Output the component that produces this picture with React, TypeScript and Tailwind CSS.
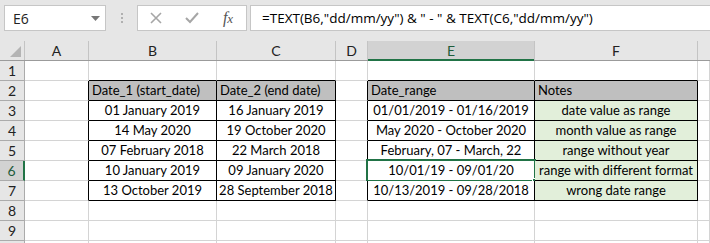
import React from 'react'

const colW = ['w-[25px]', 'w-[64px]', 'w-[128px]', 'w-[119px]', 'w-[32px]', 'w-[167px]', 'w-[163px]', 'flex-1']
const letters = ['', 'A', 'B', 'C', 'D', 'E', 'F', '']

type Cell = { text: string; head?: boolean; note?: boolean }

const data: Record<number, Record<number, Cell>> = {
    2: {
        2: { text: 'Date_1 (start_date)', head: true },
        3: { text: 'Date_2 (end date)', head: true },
        5: { text: 'Date_range', head: true },
        6: { text: 'Notes', head: true },
    },
    3: {
        2: { text: '01 January 2019' },
        3: { text: '16 January 2019' },
        5: { text: '01/01/2019 - 01/16/2019' },
        6: { text: 'date value as range', note: true },
    },
    4: {
        2: { text: '14 May 2020' },
        3: { text: '19 October 2020' },
        5: { text: 'May 2020 - October 2020' },
        6: { text: 'month value as range', note: true },
    },
    5: {
        2: { text: '07 February 2018' },
        3: { text: '22 March 2018' },
        5: { text: 'February, 07 - March, 22' },
        6: { text: 'range without year', note: true },
    },
    6: {
        2: { text: '10 January 2019' },
        3: { text: '09 January 2020' },
        5: { text: '10/01/19 - 09/01/20' },
        6: { text: 'range with different format', note: true },
    },
    7: {
        2: { text: '13 October 2019' },
        3: { text: '28 September 2018' },
        5: { text: '10/13/2019 - 09/28/2018' },
        6: { text: 'wrong date range', note: true },
    },
}

const inTable = (r: number, c: number) => r >= 2 && r <= 7 && (c === 2 || c === 3 || c === 5 || c === 6)

function Row({ r }: { r: number }) {
    const sel = r === 6
    return (
        <div className="flex h-[20px]">
            <div
                className={
                    sel
                        ? 'w-[25px] shrink-0 flex items-center justify-center bg-[#d2d2d2] border-b border-b-[#ababab] border-r-2 border-r-[#217346] text-[#1e5c3a] text-[14px]'
                        : 'w-[25px] shrink-0 flex items-center justify-center bg-[#e6e6e6] border-b border-b-[#ababab] border-r border-r-[#ababab] text-[#222] text-[14px]'
                }
            >
                {r < 10 ? r : ''}
            </div>
            {[1, 2, 3, 4, 5, 6, 7].map(c => {
                const cell = data[r]?.[c]
                const rightBlack = inTable(r, c) || inTable(r, c + 1)
                const bottomBlack = inTable(r, c) || inTable(r + 1, c)
                const bg = cell?.head ? 'bg-[#bfbfbf]' : cell?.note ? 'bg-[#e2efda]' : 'bg-white'
                const align = cell?.head ? 'justify-start pl-[3px]' : 'justify-center'
                return (
                    <div
                        key={c}
                        className={[
                            'relative flex items-end pb-[1px] shrink-0 border-r border-b text-[13px] leading-[18px] text-black whitespace-nowrap',
                            colW[c],
                            rightBlack ? 'border-r-black' : 'border-r-[#d4d4d4]',
                            bottomBlack ? 'border-b-black' : 'border-b-[#d4d4d4]',
                            bg,
                            align,
                        ].join(' ')}
                    >
                        {cell?.text}
                        {r === 6 && c === 5 && (
                            <div className="absolute -left-[2px] -top-[2px] -right-[2px] -bottom-[2px] border-2 border-[#217346]">
                                <div className="absolute -right-[4px] -bottom-[4px] w-[6px] h-[6px] bg-[#217346] border border-white" />
                            </div>
                        )}
                    </div>
                )
            })}
        </div>
    )
}

export default function App() {
    return (
        <div className="w-[710px] h-[243px] overflow-hidden bg-white" style={{ fontFamily: 'Lato, "Liberation Sans", sans-serif' }}>
            {/* toolbar */}
            <div className="h-[41px] bg-[#e6e6e6] flex items-start pt-[5px] pl-[4px]">
                <div className="w-[102px] h-[26px] bg-white border border-[#c6c6c6] flex items-center justify-between pl-[8px] pr-[5px]">
                    <span className="text-[14px] text-[#222]" style={{ fontFamily: '"Open Sans", sans-serif' }}>E6</span>
                    <svg width="9" height="5" viewBox="0 0 9 5"><path d="M0 0h9L4.5 5z" fill="#777" /></svg>
                </div>
                <div className="w-[31px] h-[26px] flex flex-col items-center justify-center gap-[2px]">
                    <div className="w-[2px] h-[2px] bg-[#b0b0b0]" />
                    <div className="w-[2px] h-[2px] bg-[#b0b0b0]" />
                    <div className="w-[2px] h-[2px] bg-[#b0b0b0]" />
                </div>
                <div className="w-[110px] h-[26px] bg-white border border-[#c6c6c6] flex items-center">
                    <div className="w-[36px] flex justify-center">
                        <svg width="12" height="12" viewBox="0 0 12 12"><path d="M1 1l10 10M11 1L1 11" stroke="#a6a6a6" strokeWidth="1.6" /></svg>
                    </div>
                    <div className="w-[36px] flex justify-center">
                        <svg width="14" height="12" viewBox="0 0 14 12"><path d="M1 6l4 4 8-9" stroke="#a6a6a6" strokeWidth="2" fill="none" /></svg>
                    </div>
                    <div className="w-[36px] flex justify-center items-baseline italic text-[16px] text-[#555]" style={{ fontFamily: '"Liberation Serif", serif' }}>
                        f<span className="text-[13px]">x</span>
                    </div>
                </div>
                <div className="ml-[3px] flex-1 h-[26px] bg-white border border-[#c6c6c6] border-r-0 flex items-center pl-[11px] text-[13.5px] text-black whitespace-nowrap" style={{ fontFamily: '"Open Sans", sans-serif' }}>
                    =TEXT(B6,"dd/mm/yy") &amp; " - " &amp; TEXT(C6,"dd/mm/yy")
                </div>
            </div>
            {/* column headers */}
            <div className="flex h-[20px] bg-[#e6e6e6] border-b border-[#9b9b9b]">
                {colW.map((w, i) => (
                    <div
                        key={i}
                        className={[
                            'relative shrink-0 flex items-center justify-center text-[14px]',
                            w,
                            i === 7 ? '' : 'border-r border-r-[#c4c4c4]',
                            i === 5 ? 'bg-[#d2d2d2] text-[#1e5c3a]' : 'text-[#222]',
                        ].join(' ')}
                    >
                        {i === 0 && (
                            <svg className="absolute right-[3px] bottom-[3px]" width="11" height="11" viewBox="0 0 11 11"><path d="M11 0v11H0z" fill="#b4b4b4" /></svg>
                        )}
                        {letters[i]}
                        {i === 5 && <div className="absolute left-0 right-0 -bottom-[1px] h-[2px] bg-[#217346]" />}
                    </div>
                ))}
            </div>
            {[1, 2, 3, 4, 5, 6, 7, 8, 9, 10].map(r => (
                <Row key={r} r={r} />
            ))}
        </div>
    )
}
